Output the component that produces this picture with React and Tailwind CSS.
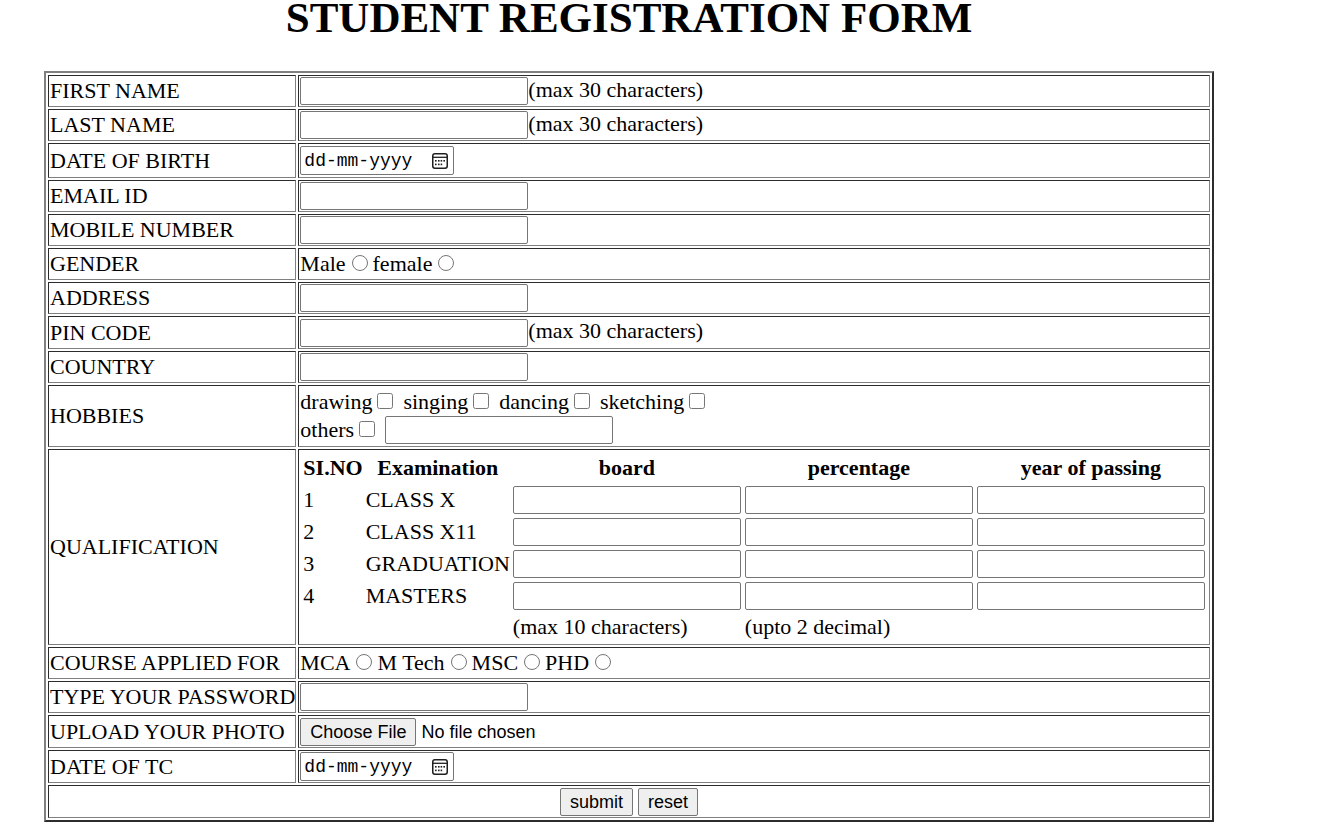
import { useId } from 'react';

const label = 'border border-t-[#2c2c2c] border-l-[#2c2c2c] border-b-[#808080] border-r-[#808080] py-px pl-px text-left font-normal whitespace-nowrap';
const cell = 'border border-t-[#2c2c2c] border-l-[#2c2c2c] border-b-[#808080] border-r-[#808080] p-px';
const field = 'h-7 w-[228px] rounded-xs border border-[#767676] bg-white px-1 font-["Liberation_Sans",sans-serif] text-lg outline-none';
const button = 'h-7 rounded-xs border border-[#767676] bg-[#efefef] px-[9px] font-["Liberation_Sans",sans-serif] text-lg leading-6';

function Row({ title, htmlFor, height = 'h-8', children }) {
  return (
    <tr className={height}>
      <th scope="row" className={label}>
        {htmlFor ? <label htmlFor={htmlFor}>{title}</label> : title}
      </th>
      <td className={cell}>{children}</td>
    </tr>
  );
}

function TextRow({ title, note, type = 'text', height }) {
  const id = useId();
  return (
    <Row title={title} htmlFor={id} height={height}>
      <div className="flex h-7 items-center">
        <input id={id} type={type} className={field} />
        {note && <span className="pb-[3px]">{note}</span>}
      </div>
    </Row>
  );
}

function CalendarIcon() {
  return (
    <svg viewBox="0 0 18 18" className="size-[18px]" aria-hidden="true">
      <rect x="1.75" y="1.75" width="14.5" height="14.5" rx="2.2" fill="none" stroke="#1f1f1f" strokeWidth="1.5" />
      <path d="M2 5.3h14" stroke="#1f1f1f" strokeWidth="1.3" />
      <g fill="#1f1f1f">
        <rect x="4" y="8" width="1.6" height="1.6" />
        <rect x="7" y="8" width="1.6" height="1.6" />
        <rect x="9.6" y="8" width="1.6" height="1.6" />
        <rect x="12.4" y="8" width="1.6" height="1.6" />
        <rect x="4" y="11.6" width="1.6" height="1.6" />
        <rect x="7" y="11.6" width="1.6" height="1.6" />
        <rect x="9.6" y="11.6" width="1.6" height="1.6" />
      </g>
    </svg>
  );
}

function DateRow({ title, height }) {
  const id = useId();
  return (
    <Row title={title} htmlFor={id} height={height}>
      <div className="flex h-[29px] w-[154px] items-center rounded-xs border border-[#767676] bg-white pr-1 pl-[3px]">
        <input
          id={id}
          type="text"
          placeholder="dd-mm-yyyy"
          className='min-w-0 flex-1 font-["Liberation_Mono",monospace] text-lg leading-6 outline-none placeholder:text-black'
        />
        <button type="button" aria-label="Open calendar" className="shrink-0">
          <CalendarIcon />
        </button>
      </div>
    </Row>
  );
}

function Radio({ name, children }) {
  return (
    <label className="flex items-center">
      {children}
      <input type="radio" name={name} className="mr-[5px] mb-[3px] ml-[6px] size-4" />
    </label>
  );
}

function Check({ children }) {
  return (
    <label className="flex items-center">
      {children}
      <input type="checkbox" className="mr-[10px] mb-[3px] ml-[5px] size-4" />
    </label>
  );
}

const exams = ['CLASS X', 'CLASS X11', 'GRADUATION', 'MASTERS'];
const details = ['board', 'percentage', 'year of passing'];

function Qualification() {
  return (
    <table className="border-separate border-spacing-[2px]">
      <thead>
        <tr className="h-[29px]">
          <th className="py-px pl-px">SI.NO</th>
          <th className="py-px pl-px">Examination</th>
          {details.map((d) => (
            <th key={d} className="p-px">{d}</th>
          ))}
        </tr>
      </thead>
      <tbody>
        {exams.map((exam, i) => (
          <tr key={exam}>
            <td className="py-px pl-px">{i + 1}</td>
            <td className="py-px pl-px">{exam}</td>
            {details.map((d) => (
              <td key={d} className="p-px">
                <input type="text" aria-label={`${exam} ${d}`} className={`${field} block`} />
              </td>
            ))}
          </tr>
        ))}
        <tr className="h-7">
          <td />
          <td />
          <td className="p-px">(max 10 characters)</td>
          <td className="p-px">(upto 2 decimal)</td>
          <td />
        </tr>
      </tbody>
    </table>
  );
}

export default function App() {
  const photo = useId();
  return (
    <main className='min-h-screen bg-white pr-[104px] pl-11 font-["Liberation_Serif",serif] text-[22px] leading-[26px] text-black'>
      <h1 className="mb-[35px] text-center text-[43px] leading-9 font-bold">STUDENT REGISTRATION FORM</h1>
      <form onSubmit={(e) => e.preventDefault()}>
        <table className="w-full border-separate border-spacing-[2px] border-2 border-t-[#808080] border-r-[#2c2c2c] border-b-[#2c2c2c] border-l-[#808080]">
          <tbody>
            <TextRow title="FIRST NAME" note="(max 30 characters)" />
            <TextRow title="LAST NAME" note="(max 30 characters)" />
            <DateRow title="DATE OF BIRTH" height="h-[35px]" />
            <TextRow title="EMAIL ID" type="email" />
            <TextRow title="MOBILE NUMBER" type="tel" />
            <Row title="GENDER">
              <div className="flex items-center">
                <Radio name="gender">Male</Radio>
                <Radio name="gender">female</Radio>
              </div>
            </Row>
            <TextRow title="ADDRESS" />
            <TextRow title="PIN CODE" note="(max 30 characters)" height="h-[33px]" />
            <TextRow title="COUNTRY" />
            <Row title="HOBBIES" height="h-[62px]">
              <div className="flex h-7 items-center">
                <Check>drawing</Check>
                <Check>singing</Check>
                <Check>dancing</Check>
                <Check>sketching</Check>
              </div>
              <div className="flex h-7 items-center">
                <Check>others</Check>
                <input type="text" aria-label="Other hobbies" className={field} />
              </div>
            </Row>
            <Row title="QUALIFICATION" height="h-[196px]">
              <Qualification />
            </Row>
            <Row title="COURSE APPLIED FOR">
              <div className="flex items-center">
                <Radio name="course">MCA</Radio>
                <Radio name="course">M Tech</Radio>
                <Radio name="course">MSC</Radio>
                <Radio name="course">PHD</Radio>
              </div>
            </Row>
            <TextRow title="TYPE YOUR PASSWORD" type="password" />
            <Row title="UPLOAD YOUR PHOTO" htmlFor={photo} height="h-[33px]">
              <input
                id={photo}
                type="file"
                className='block font-["Liberation_Sans",sans-serif] text-lg leading-6 file:mr-[5px] file:h-7 file:rounded-xs file:border file:border-solid file:border-[#767676] file:bg-[#efefef] file:px-[9px]'
              />
            </Row>
            <DateRow title="DATE OF TC" height="h-[33px]" />
            <tr className="h-[33px]">
              <td colSpan={2} className={cell}>
                <div className="flex justify-center gap-[5px]">
                  <button type="submit" className={button}>submit</button>
                  <button type="reset" className={button}>reset</button>
                </div>
              </td>
            </tr>
          </tbody>
        </table>
      </form>
    </main>
  );
}
